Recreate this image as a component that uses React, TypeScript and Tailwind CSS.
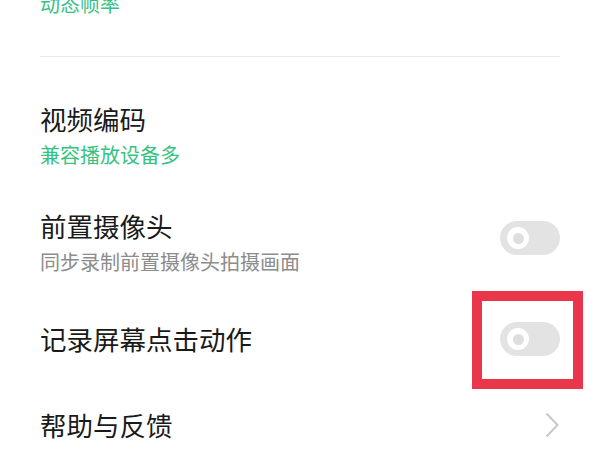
import React from "react";

function Toggle() {
  return (
    <div className="w-[60px] h-[34px] rounded-full bg-[#e3e3e3] flex items-center pl-[7px]">
      <div className="w-[22px] h-[22px] rounded-full bg-white flex items-center justify-center">
        <div className="w-[11px] h-[11px] rounded-full bg-[#dedede]" />
      </div>
    </div>
  );
}

export default function App() {
  const font = { fontFamily: '"Noto Sans CJK SC", "Noto Sans", sans-serif' };
  return (
    <div className="w-[600px] h-[450px] overflow-hidden bg-white" style={font}>
      <div className="px-[40px]">
        <div className="-mt-[9px] text-[20px] leading-[26px] text-[#36c281]">动态帧率</div>
        <div className="mt-[39px] h-px bg-[#ebebeb]" />

        <div className="mt-[45px]">
          <div className="text-[26.5px] leading-[34px] text-[#1a1a1a]">视频编码</div>
          <div className="mt-[6px] text-[20px] leading-[26px] text-[#36c281]">兼容播放设备多</div>
        </div>

        <div className="mt-[41px] flex items-start justify-between">
          <div>
            <div className="text-[26.5px] leading-[34px] text-[#1a1a1a]">前置摄像头</div>
            <div className="mt-[6px] text-[20px] leading-[26px] text-[#8c8c8c]">同步录制前置摄像头拍摄画面</div>
          </div>
          <div className="mt-[12px]">
            <Toggle />
          </div>
        </div>

        <div className="mt-[47px] flex items-center justify-between">
          <div className="text-[26.5px] leading-[34px] text-[#1a1a1a]">记录屏幕点击动作</div>
          <div className="relative">
            <Toggle />
            <div className="absolute -left-[28px] -top-[31px] w-[111px] h-[98px] border-[10px] border-[#e9364a]" />
          </div>
        </div>

        <div className="mt-[52px] flex items-center justify-between">
          <div className="text-[26.5px] leading-[34px] text-[#1a1a1a]">帮助与反馈</div>
          <svg width="14" height="26" viewBox="0 0 14 26" className="mr-[1px]">
            <polyline points="1.5,1.5 12.5,13 1.5,24.5" fill="none" stroke="#c8c8c8" strokeWidth="2" />
          </svg>
        </div>
      </div>
    </div>
  );
}
